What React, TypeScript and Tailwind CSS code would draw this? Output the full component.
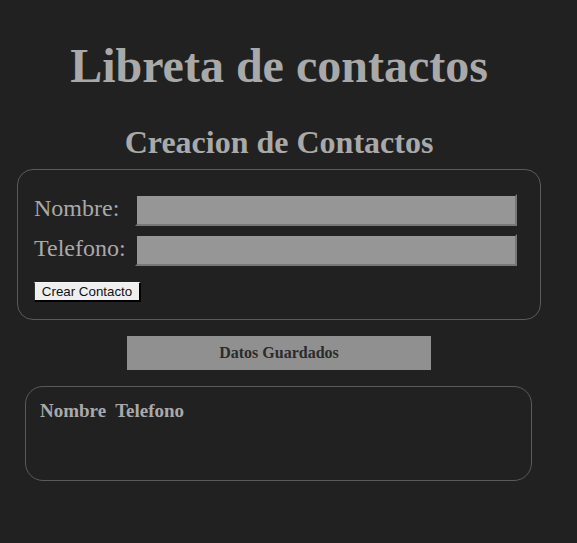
export default function App() {
  return (
    <div className="min-h-[543px] w-full bg-[#212121] pb-8">
      <div className="ml-2 w-[542px] flex flex-col text-[#a9a9a9] [font-family:'Liberation_Serif',serif]">
        <h1 className="mt-[42px] text-center text-[48px] leading-[48px] font-bold">Libreta de contactos</h1>
        <h2 className="mt-[36px] text-center text-[32px] leading-[32px] font-bold">Creacion de Contactos</h2>
        <div className="mt-[11px] mx-[9px] h-[151px] rounded-[16px] border border-[#5a5a5a] pt-[24px] pl-[16px] flex flex-col">
          <div className="flex h-[32px]">
            <label className="w-[101px] mt-[2px] text-[24px] leading-[24px]">Nombre:</label>
            <div className="w-[382px] h-[32px] bg-[#969696] border-t-2 border-l-2 border-t-[#212121] border-l-[#212121] border-b-2 border-r-2 border-b-[#777777] border-r-[#777777]" />
          </div>
          <div className="flex h-[32px] mt-[8px]">
            <label className="w-[101px] mt-[2px] text-[24px] leading-[24px]">Telefono:</label>
            <div className="w-[382px] h-[32px] bg-[#969696] border-t-2 border-l-2 border-t-[#212121] border-l-[#212121] border-b-2 border-r-2 border-b-[#777777] border-r-[#777777]" />
          </div>
          <div className="mt-[16px] flex">
            <button className="h-[20px] w-[107px] bg-[#efefef] text-[#111111] text-[13.33px] leading-[16px] [font-family:'Liberation_Sans',Arial,sans-serif] border-t border-l border-t-[#f5f5f5] border-l-[#333333] border-r-2 border-b-2 border-r-black border-b-black flex items-center justify-center">
              Crear Contacto
            </button>
          </div>
        </div>
        <div className="mt-[16px] mx-auto w-[304px] h-[34px] bg-[#909090] flex items-center justify-center text-[16px] font-bold text-[#2b2b2b]">
          Datos Guardados
        </div>
        <div className="mt-[16px] ml-[17px] w-[507px] h-[95px] rounded-[18px] border border-[#5a5a5a] pt-[13px] pl-[14px]">
          <div className="flex gap-[9px] text-[19px] leading-[22px] font-bold">
            <span>Nombre</span>
            <span>Telefono</span>
          </div>
        </div>
      </div>
    </div>
  );
}
